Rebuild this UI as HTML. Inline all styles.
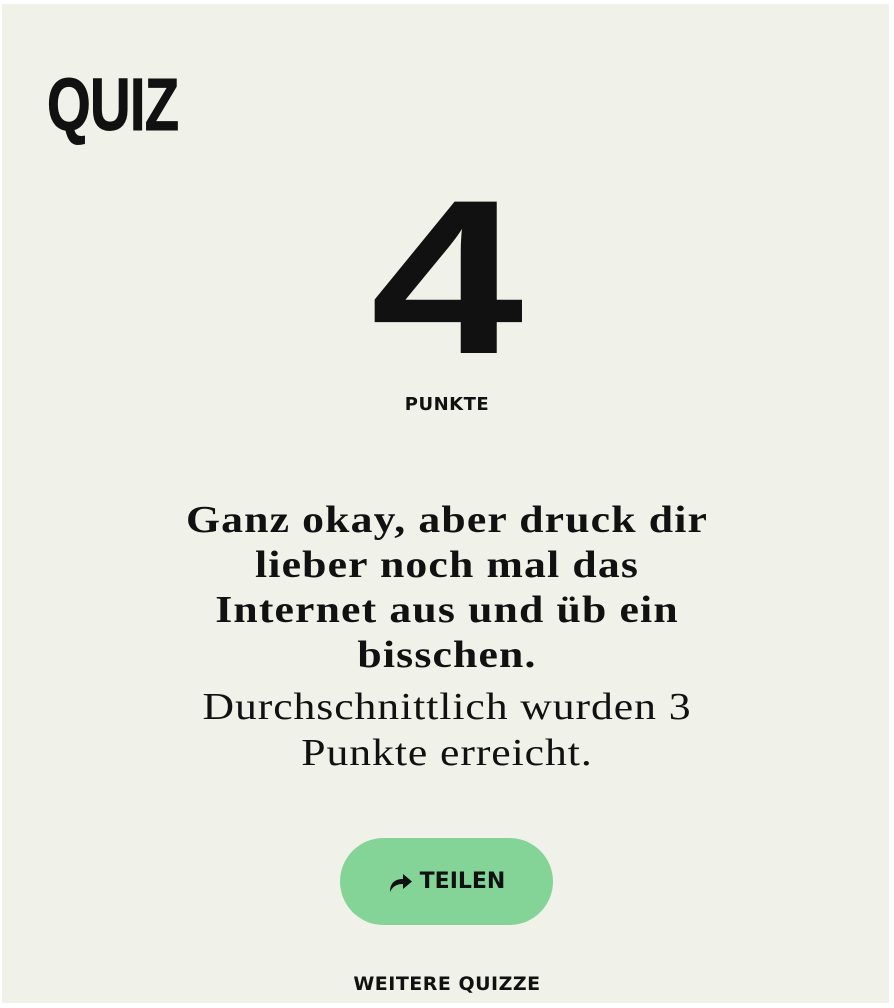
<!DOCTYPE html>
<html><head><meta charset="utf-8"><style>
html,body{margin:0;padding:0;background:#fff;width:894px;height:1008px;overflow:hidden}
.p{position:absolute;left:2px;top:4px;width:887px;height:999px;background:#f0f1e8}
.q{position:absolute;left:47px;top:62px;font:bold 74px "Liberation Sans",sans-serif;color:#111;transform:scaleX(0.76);transform-origin:left top;letter-spacing:-1px;-webkit-text-stroke:1px #111}
.n{position:absolute;left:0;width:894px;top:152px;text-align:center;font:bold 220px/250px "Liberation Sans",sans-serif;color:#111;transform:scaleX(1.25)}
.pk{position:absolute;left:0;width:894px;top:394px;text-align:center;font:bold 18px "DejaVu Sans",sans-serif;letter-spacing:0.5px;color:#111}
.t{position:absolute;left:97px;width:700px;top:498px;text-align:center;font:bold 38px/45px "Liberation Serif",serif;letter-spacing:1px;color:#111;transform:scaleX(1.15)}
.s{position:absolute;left:97px;width:700px;top:684px;text-align:center;font:38px/46px "Liberation Serif",serif;letter-spacing:0.8px;color:#111;transform:scaleX(1.15)}
.b{position:absolute;left:340px;top:838px;width:213px;height:87px;border-radius:44px;background:#84d498;display:flex;align-items:center;justify-content:center;font:bold 22px "DejaVu Sans",sans-serif;color:#111}
.b svg{margin-right:6px}
.w{position:absolute;left:0;width:894px;top:973px;text-align:center;font:bold 19px "DejaVu Sans",sans-serif;color:#111;letter-spacing:0.5px}
</style></head><body><div class="p"></div>
<div class="q">QUIZ</div>
<div class="n">4</div>
<div class="pk">PUNKTE</div>
<div class="t">Ganz okay, aber druck dir<br>lieber noch mal das<br>Internet aus und üb ein<br>bisschen.</div>
<div class="s">Durchschnittlich wurden 3<br>Punkte erreicht.</div>
<div class="b"><svg width="26" height="22" viewBox="0 0 26 22"><path d="M2 21C2 12 7 8 15 8V3L24 10.5L15 18V13C9 13 5 15 2 21Z" fill="#111"/></svg>TEILEN</div>
<div class="w">WEITERE QUIZZE</div>
</body></html>
